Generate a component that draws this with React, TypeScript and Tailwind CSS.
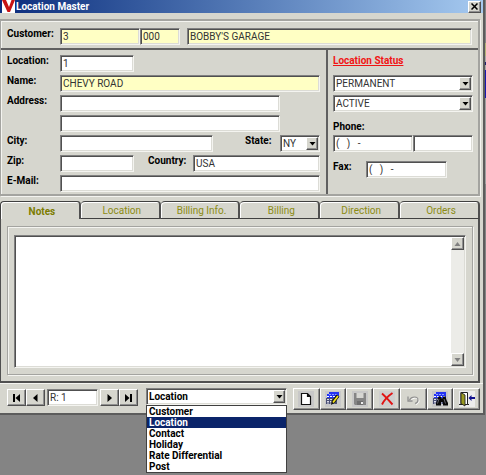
import React from "react";

const sunken =
  "border border-t-[#808080] border-l-[#808080] border-b-[#f4f4f0] border-r-[#f4f4f0] shadow-[inset_1px_1px_0_#505050,inset_-1px_-1px_0_#dcdcd6]";
const raised =
  "border border-t-white border-l-white border-b-[#505050] border-r-[#505050] shadow-[inset_-1px_-1px_0_#909090] bg-[#d6d6ce]";
const field = `h-[17px] min-w-0 rounded-none px-0.5 text-[10px] leading-3 text-[#333] outline-none ${sunken}`;
const label = "shrink-0 text-[10px] leading-3 font-bold text-black";

function Field({
  id,
  name,
  value = "",
  className = "",
  yellow = false,
}: {
  id: string;
  name?: string;
  value?: string;
  className?: string;
  yellow?: boolean;
}) {
  return (
    <input
      id={id}
      type="text"
      aria-label={name}
      defaultValue={value}
      className={`${field} ${yellow ? "bg-[#ffffc4]" : "bg-white"} ${className}`}
    />
  );
}

function Picker({
  id,
  name,
  options,
  className = "",
  bold = false,
}: {
  id: string;
  name?: string;
  options: string[];
  className?: string;
  bold?: boolean;
}) {
  return (
    <div className={`relative h-[17px] ${className}`}>
      <select
        id={id}
        aria-label={name}
        className={`${field} block w-full appearance-none bg-white ${bold ? "font-bold text-black" : ""}`}
      >
        {options.map((o) => (
          <option key={o}>{o}</option>
        ))}
      </select>
      <span
        className={`pointer-events-none absolute top-0.5 right-0.5 bottom-0.5 flex w-3 items-center justify-center ${raised}`}
      >
        <svg width="7" height="4" viewBox="0 0 7 4">
          <path d="M.5 0h6L3.500 3.500z" fill="#000" />
        </svg>
      </span>
    </div>
  );
}

function FormRow({
  id,
  text,
  children,
}: {
  id?: string;
  text?: string;
  children: React.ReactNode;
}) {
  return (
    <div className="flex h-[17px] items-start">
      <label htmlFor={id} className={`${label} w-[53px]`}>
        {text}
      </label>
      {children}
    </div>
  );
}

const tabs = ["Notes", "Location", "Billing Info.", "Billing", "Direction", "Orders"];

function Tabs() {
  return (
    <div role="tablist" className="flex h-[18px]">
      {tabs.map((t, i) => (
        <button
          key={t}
          type="button"
          role="tab"
          aria-selected={i === 0}
          className={`flex-1 rounded-t-[4px] border-t border-r-2 border-t-[#404040] border-r-[#505050] text-center text-[10px] leading-3 shadow-[inset_1px_1px_0_#fff] ${
            i === 0
              ? "border-l border-l-[#404040] pt-0.5 pl-1 font-bold text-[#7c7c00]"
              : "border-b border-b-[#404040] pt-px pl-1 text-[#8c8c14]"
          }`}
        >
          {t}
        </button>
      ))}
    </div>
  );
}

const navPaths: Record<string, string> = {
  First: "M1 0h2v8H1zM8 0v8L3.5 4z",
  Previous: "M6.5 0v8L2 4z",
  Next: "M2.5 0v8L7 4z",
  Last: "M1 0v8l4.5-4zM6 0h2v8H6z",
};

function NavButton({ name }: { name: string }) {
  return (
    <button
      type="button"
      aria-label={name}
      className={`flex h-[17px] w-[19px] items-center justify-center ${raised}`}
    >
      <svg width="9" height="8" viewBox="0 0 9 8">
        <path d={navPaths[name]} fill="#000" />
      </svg>
    </button>
  );
}

function Sheet() {
  return (
    <>
      <path d="M2 3h2V1h10v6H2z" fill="#2434f4" />
      <path d="M4 3.500h9" stroke="#8c9cff" strokeDasharray="2 1" />
      <path d="M2 5.500h11" stroke="#fff" strokeDasharray="2 1" />
      <path d="M1 7h11v6H1z" fill="#4a5074" />
      <path d="M2 8.500h9M2 10.500h9M2 12h9" stroke="#dcdcec" strokeDasharray="2 1" />
    </>
  );
}

const tools: { name: string; backing?: string; art: React.ReactNode }[] = [
  {
    name: "New",
    backing: "bg-[#c8c8c8]",
    art: <path d="M3.500 2.500h6l3 3v8h-9zM9.500 2.500v3h3" fill="#fff" stroke="#111" strokeWidth="1.200" />,
  },
  {
    name: "Edit",
    backing: "bg-[#c8c8c8]",
    art: (
      <>
        <Sheet />
        <path d="M13 4.500L7.500 12" stroke="#111" strokeWidth="3.600" />
        <path d="M13 5L8 11.500" stroke="#f4e41c" strokeWidth="1.800" />
        <path d="M6 14l.5-3 2 1.500z" fill="#111" />
      </>
    ),
  },
  {
    name: "Save",
    backing: "bg-[#c8c8c8]",
    art: (
      <>
        <path d="M2 2h12v12H3l-1-1z" fill="#858585" />
        <path d="M4.500 2h7v5h-7z" fill="#d6d6d2" />
        <path d="M5 10h6v4H5z" fill="#6e6e6e" />
        <path d="M9 11h2v2H9z" fill="#eee" />
      </>
    ),
  },
  {
    name: "Delete",
    backing: "bg-[#cecece]",
    art: (
      <path d="M3 2.500c3 2.500 7 7 10.500 11M13.500 2C9 5 5 9.500 3 13.500" fill="none" stroke="#e01414" strokeWidth="1.900" />
    ),
  },
  {
    name: "Undo",
    art: (
      <>
        <path d="M5.500 10c2-4 8.500-4 8.500 0 0 2-1.500 3-3 3.500" fill="none" stroke="#fff" />
        <path d="M4.500 9c2-4 8.500-4 8.500 0 0 2-1.500 3-3 3.500" fill="none" stroke="#909090" strokeWidth="1.200" />
        <path d="M3 5.500v4.500h4.500" fill="none" stroke="#909090" strokeWidth="1.300" />
      </>
    ),
  },
  {
    name: "Find",
    backing: "bg-[#c8c8c8]",
    art: (
      <>
        <Sheet />
        <path d="M6.500 5.500h2.500v2h2v-2h2.500l1 3.500 1.500 3v2.500h-5V11H9v3.500H4V12l1.500-3z" fill="#080808" />
        <path d="M7 8l-1.500 4.500M12 8l1.500 4.500" stroke="#8a8a9a" strokeWidth=".7" />
      </>
    ),
  },
  {
    name: "Exit",
    backing: "bg-[#ececec]",
    art: (
      <>
        <path d="M0 13.500h10" stroke="#222" />
        <path d="M2 1.500h6.500v12H2z" fill="#fff" stroke="#222" />
        <path d="M2 1.500l4 2.500v11l-4-2.500z" fill="#9a9a20" stroke="#222" strokeWidth=".9" />
        <path d="M9.500 7l3-3v2H16v2h-3.500v2z" fill="#10108c" />
      </>
    ),
  },
];

const screens = ["Customer", "Location", "Contact", "Holiday", "Rate Differential", "Post"];

function ScrollButton({ up = false }: { up?: boolean }) {
  return (
    <button
      type="button"
      aria-label={up ? "Scroll up" : "Scroll down"}
      className={`flex h-[13px] items-center justify-center ${raised}`}
    >
      <svg width="7" height="4" viewBox="0 0 7 4">
        <path d={up ? "M.5 4h6L3.500 0z" : "M.5 0h6L3.500 4z"} fill="#808080" />
      </svg>
    </button>
  );
}

export default function App() {
  return (
    <div className="flex min-h-screen items-start bg-[#848484] font-['Roboto','Liberation_Sans',sans-serif]">
      <main className="min-w-0 flex-1 border-r-2 border-b-2 border-[#5c5c5c] bg-[#d6d6ce]">
        <header className="flex h-[13px] items-center bg-linear-to-r from-[#0c2c7c] to-[#a6caf0] pr-0.5 pl-0.5">
          <svg width="13" height="13" viewBox="0 0 13 13" aria-hidden="true">
            <path d="M0 0h13v13H0z" fill="#fff" />
            <path d="M0 0h4l3 7 2.500-7H13L8 12H5.500z" fill="#c81414" />
          </svg>
          <h1 className="ml-px flex-1 text-[10px] leading-3 font-bold text-white">Location Master</h1>
          <button type="button" aria-label="Close" className={`flex h-3 w-[13px] items-center justify-center ${raised}`}>
            <svg width="7" height="7" viewBox="0 0 7 7">
              <path d="M.5.5l6 6M6.500.5l-6 6" stroke="#000" strokeWidth="1.500" />
            </svg>
          </button>
        </header>

        <div className="pt-1.5 pr-[3px]">
          <section className="border-2 border-l border-[#a4a4a0] shadow-[inset_1px_1px_0_#f4f4f0,1px_1px_0_#f4f4f0]">
            <div className="flex items-start border-b-2 border-[#606060] px-1.5 pt-[7px] pb-[3px]">
              <label htmlFor="customer" className={`${label} w-[53px]`}>
                Customer:
              </label>
              <Field id="customer" value="3" yellow className="w-20" />
              <Field id="suffix" name="Customer suffix" value="000" yellow className="w-10" />
              <Field id="custname" name="Customer name" value="BOBBY'S GARAGE" yellow className="ml-[7px] flex-1" />
            </div>
            <div className="flex">
              <div className="flex min-w-0 flex-1 flex-col gap-[3px] pt-[5px] pr-1.5 pb-0.5 pl-1.5">
                <FormRow id="location" text="Location:">
                  <Field id="location" value="1" className="w-[74px]" />
                </FormRow>
                <FormRow id="name" text="Name:">
                  <Field id="name" value="CHEVY ROAD" yellow className="flex-1" />
                </FormRow>
                <FormRow id="address" text="Address:">
                  <Field id="address" className="mr-10 flex-1" />
                </FormRow>
                <FormRow>
                  <Field id="address2" name="Address line 2" className="mr-10 flex-1" />
                </FormRow>
                <FormRow id="city" text="City:">
                  <Field id="city" className="mr-8 flex-1" />
                  <label htmlFor="state" className={`${label} w-[35px]`}>
                    State:
                  </label>
                  <Picker id="state" options={["NY"]} className="w-10" />
                </FormRow>
                <FormRow id="zip" text="Zip:">
                  <Field id="zip" className="w-[74px]" />
                  <label htmlFor="country" className={`${label} ml-3.5 w-[45px]`}>
                    Country:
                  </label>
                  <Field id="country" value="USA" className="flex-1" />
                </FormRow>
                <FormRow id="email" text="E-Mail:">
                  <Field id="email" className="flex-1" />
                </FormRow>
              </div>
              <div className="w-[152px] border-l-2 border-[#606060] pt-[5px] pr-[5px] pl-[5px]">
                <h2 className="text-[10px] leading-3 font-bold text-[#f01414] underline">Location Status</h2>
                <Picker id="term" name="Location term" options={["PERMANENT"]} className="mt-2" />
                <Picker id="status" name="Location status" options={["ACTIVE"]} className="mt-[3px]" />
                <label htmlFor="phone" className={`${label} mt-[9px] mb-0.5 block`}>
                  Phone:
                </label>
                <div className="flex">
                  <Field id="phone" value="(   )   -" className="w-20" />
                  <Field id="ext" name="Phone extension" className="flex-1" />
                </div>
                <div className="mt-[9px] flex items-start">
                  <label htmlFor="fax" className={`${label} w-[33px]`}>
                    Fax:
                  </label>
                  <Field id="fax" value="(   )   -" className="w-[81px]" />
                </div>
              </div>
            </div>
          </section>

          <section className="mt-[5px]">
            <Tabs />
            <div className="border-r-2 border-b-2 border-l border-[#505050] pt-[7px] pr-[5px] pb-1.5 pl-1.5">
              <div className="border border-[#a4a4a0] px-1.5 pt-2 pb-1.5 shadow-[inset_1px_1px_0_#f4f4f0,1px_1px_0_#f4f4f0]">
                <div className={`flex h-[133px] bg-white p-px ${sunken}`}>
                  <textarea aria-label="Notes" className="min-w-0 flex-1 resize-none p-1 text-[10px] outline-none" />
                  <div className="flex w-[13px] flex-col justify-between bg-[#ecece8]">
                    <ScrollButton up />
                    <ScrollButton />
                  </div>
                </div>
              </div>
            </div>
          </section>
        </div>

        <footer className="flex items-start border-t border-[#f4f4f0] px-[3px] pt-1 pb-[3px] pl-[7px]">
          <div className="mt-px flex">
            <NavButton name="First" />
            <NavButton name="Previous" />
            <Field id="record" name="Record" value="R: 1" className="mx-0.5 w-[51px]" />
            <NavButton name="Next" />
            <NavButton name="Last" />
          </div>
          <div className="relative mr-1.5 ml-2 min-w-0 flex-1">
            <Picker id="screen" name="Screen" options={["Location", ...screens.filter((s) => s !== "Location")]} bold />
            <ul
              role="listbox"
              aria-label="Screens"
              className="absolute top-full left-0 z-10 w-full border border-[#404040] bg-white text-[10px] leading-[11px] font-bold text-black"
            >
              {screens.map((s) => (
                <li
                  key={s}
                  role="option"
                  aria-selected={s === "Location"}
                  className={`px-0.5 ${s === "Location" ? "bg-[#0a246a] text-white" : ""}`}
                >
                  {s}
                </li>
              ))}
            </ul>
          </div>
          <div className="flex w-[187px]">
            {tools.map((t) => (
              <button
                key={t.name}
                type="button"
                aria-label={t.name}
                className={`flex h-[22px] flex-1 items-center justify-center ${raised}`}
              >
                <svg width="16" height="16" viewBox="0 0 16 16" className={t.backing}>
                  {t.art}
                </svg>
              </button>
            ))}
          </div>
        </footer>
      </main>

      {/* Sliver of the parent window behind the dialog */}
      <div className="flex w-px flex-col" aria-hidden="true">
        <div className="h-[43px] bg-[#848484]" />
        <div className="h-[13px] bg-[#b4b478]" />
        <div className="h-1.5 bg-[#a8a8a8]" />
        <div className="h-[3px] bg-[#20206c]" />
        <div className="h-[5px] bg-[#a8a8a8]" />
        <div className="h-7 bg-[#1818b0]" />
        <div className="h-[86px] bg-[#a0a0a0]" />
      </div>
    </div>
  );
}
